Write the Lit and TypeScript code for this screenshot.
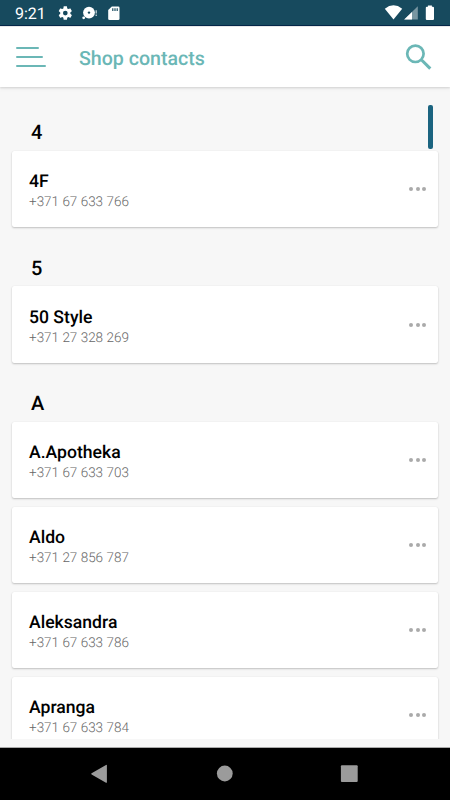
import { LitElement, html, css } from "lit";
import { customElement, property } from "lit/decorators.js";

interface Contact { name: string; phone: string; }
interface Section { letter: string; contacts: Contact[]; }

const SECTIONS: Section[] = [
  { letter: "4", contacts: [{ name: "4F", phone: "+371 67 633 766" }] },
  { letter: "5", contacts: [{ name: "50 Style", phone: "+371 27 328 269" }] },
  {
    letter: "A",
    contacts: [
      { name: "A.Apotheka", phone: "+371 67 633 703" },
      { name: "Aldo", phone: "+371 27 856 787" },
      { name: "Aleksandra", phone: "+371 67 633 786" },
      { name: "Apranga", phone: "+371 67 633 784" },
    ],
  },
];

@customElement("status-bar")
class StatusBar extends LitElement {
  static styles = css`
    :host {
      display: flex;
      flex: none;
      height: 26px;
      box-sizing: border-box;
      background: #174a5e;
      border-bottom: 1px solid #06284a;
      color: #fff;
    }
    .time { width: 57px; padding-left: 15px; box-sizing: border-box; font-size: 16px; line-height: 28px; white-space: nowrap; }
    svg { display: block; flex: none; }
    .space { flex: 1; }
  `;
  render() {
    return html`
      <span class="time">9:21</span>
      <svg width="70" height="25" viewBox="57 0 70 25" fill="#fff">
        <path transform="translate(57.2 5) scale(.675)" d="M19.43 12.98c.04-.32.07-.64.07-.98s-.03-.66-.07-.98l2.11-1.65c.19-.15.24-.42.12-.64l-2-3.46c-.12-.22-.39-.3-.61-.22l-2.49 1c-.52-.4-1.08-.73-1.69-.98l-.38-2.65C14.46 2.18 14.25 2 14 2h-4c-.25 0-.46.18-.49.42l-.38 2.65c-.61.25-1.17.59-1.69.98l-2.49-1c-.23-.09-.49 0-.61.22l-2 3.46c-.13.22-.07.49.12.64l2.11 1.65c-.04.32-.07.65-.07.98s.03.66.07.98l-2.11 1.65c-.19.15-.24.42-.12.64l2 3.46c.12.22.39.3.61.22l2.49-1c.52.4 1.08.73 1.69.98l.38 2.65c.03.24.24.42.49.42h4c.25 0 .46-.18.49-.42l.38-2.65c.61-.25 1.17-.59 1.69-.98l2.49 1c.23.09.49 0 .61-.22l2-3.46c.12-.22.07-.49-.12-.64zM12 15.5a3.5 3.5 0 1 1 0-7 3.5 3.5 0 0 1 0 7z" />
        <circle cx="89" cy="12.6" r="5.9" />
        <circle cx="89" cy="12.6" r="1.2" fill="#174a5e" />
        <circle cx="83.7" cy="17.8" r="1.4" />
        <path d="M95.6 10.2h1.2v3.4h-1.2zM95.6 14.6h1.2v1.4h-1.2z" opacity=".8" />
        <path d="M111.8 6.5h6.4q1.3 0 1.3 1.3v11q0 1.2-1.3 1.2h-8.7q-1.3 0-1.3-1.2v-8.7z" />
        <path d="M112.2 8.3h1.2v2.7h-1.2zM114.4 8.3h1.2v2.7h-1.2zM116.6 8.3h1.2v2.7h-1.2z" fill="#174a5e" />
      </svg>
      <span class="space"></span>
      <svg width="70" height="25" viewBox="380 0 70 25" fill="#fff">
        <path d="M384.8 8.7Q393.5 2 402.2 8.7L393.5 19.5z" />
        <path d="M417.8 6.2V19.6H404.2z" opacity=".42" />
        <path d="M412 12V19.6H404.2z" />
        <path d="M427.9 6.7v-1.2h4v1.2h1q1.1 0 1.1 1.1v11.1q0 1.1-1.1 1.1h-6q-1.1 0-1.1-1.1V7.8q0-1.1 1.1-1.1z" />
      </svg>
    `;
  }
}

@customElement("app-header")
class AppHeader extends LitElement {
  static styles = css`
    :host {
      display: flex;
      flex: none;
      align-items: center;
      height: 61px;
      padding: 0 16px;
      background: #fff;
      border-top: 1px solid #e7e7e7;
      box-sizing: border-box;
      box-shadow: 0 1px 2px rgba(0, 0, 0, .13), 0 2px 5px rgba(0, 0, 0, .04);
      position: relative;
      color: #6bb7b6;
    }
    .menu { display: flex; flex-direction: column; gap: 7.2px; width: 63px; }
    .line { height: 2px; border-radius: 1px; background: currentColor; }
    .short { width: 23px; }
    .medium { width: 27px; }
    .long { width: 30px; }
    .title { flex: 1; font-size: 19.6px; font-weight: 500; line-height: 24px; padding-top: 3px; }
    svg { display: block; }
  `;
  render() {
    return html`
      <div class="menu">
        <div class="line short"></div>
        <div class="line medium"></div>
        <div class="line long"></div>
      </div>
      <div class="title">Shop contacts</div>
      <svg width="30" height="30" viewBox="404 41 30 30" fill="none" stroke="currentColor" stroke-width="2.7">
        <circle cx="415.4" cy="52.8" r="8.2" />
        <path d="M421.6 59L430.3 67.6" stroke-width="3.1" />
      </svg>
    `;
  }
}

@customElement("contact-card")
class ContactCard extends LitElement {
  @property() name = "";
  @property() phone = "";
  static styles = css`
    :host {
      display: flex;
      align-items: center;
      box-sizing: border-box;
      height: 76.5px;
      padding: 0 12px 0 17px;
      background: #fff;
      border-radius: 2px;
      box-shadow: 0 1px 2px rgba(0, 0, 0, .22), 0 0 1px rgba(0, 0, 0, .08);
    }
    .info { flex: 1; padding-top: 5px; }
    .name { font-size: 17.6px; font-weight: 500; line-height: 22px; color: #000; }
    .phone { font-size: 13.5px; font-weight: 300; line-height: 19px; color: #666; }
    .dots { display: flex; gap: 2.3px; }
    .dot { width: 4px; height: 4px; border-radius: 50%; background: #aaa; }
  `;
  render() {
    return html`
      <div class="info">
        <div class="name">${this.name}</div>
        <div class="phone">${this.phone}</div>
      </div>
      <div class="dots"><i class="dot"></i><i class="dot"></i><i class="dot"></i></div>
    `;
  }
}

@customElement("nav-bar")
class NavBar extends LitElement {
  static styles = css`
    :host { display: flex; flex: none; justify-content: center; align-items: center; height: 53px; background: #000; border-top: 1px solid #aaa; box-sizing: border-box; }
    svg { display: block; }
  `;
  render() {
    return html`
      <svg width="450" height="52" viewBox="0 748 450 52" fill="#9b9b9b">
        <path d="M106 764.9q.9-.4.9.6v16.7q0 1-.9.5l-14.4-8.3q-.9-.6 0-1.1z" />
        <circle cx="224.8" cy="773.5" r="7.9" />
        <rect x="340.9" y="765.3" width="16.8" height="16.8" rx="1" />
      </svg>
    `;
  }
}

@customElement("app-root")
class AppRoot extends LitElement {
  static styles = css`
    :host {
      display: flex;
      flex-direction: column;
      width: 450px;
      height: 800px;
      overflow: hidden;
      background: #f7f7f7;
      font-family: Roboto, "Liberation Sans", sans-serif;
      text-rendering: geometricPrecision;
    }
    .list { position: relative; flex: 1; min-height: 0; overflow: hidden; padding: 4.8px 12px 0; margin-bottom: 8px; }
    .heading { height: 59px; box-sizing: border-box; padding: 28.7px 0 0 19px; font-size: 20px; font-weight: 500; line-height: 24px; color: #000; }
    .cards { display: flex; flex-direction: column; gap: 8.5px; }
    .thumb { position: absolute; top: 18px; right: 17.5px; width: 4.5px; height: 44px; border-radius: 2px; background: #1b6480; }
  `;
  render() {
    return html`
      <status-bar></status-bar>
      <app-header></app-header>
      <main class="list">
        ${SECTIONS.map((s) => html`
          <section>
            <div class="heading">${s.letter}</div>
            <div class="cards">
              ${s.contacts.map((c) => html`<contact-card .name=${c.name} .phone=${c.phone}></contact-card>`)}
            </div>
          </section>
        `)}
        <div class="thumb"></div>
      </main>
      <nav-bar></nav-bar>
    `;
  }
}
